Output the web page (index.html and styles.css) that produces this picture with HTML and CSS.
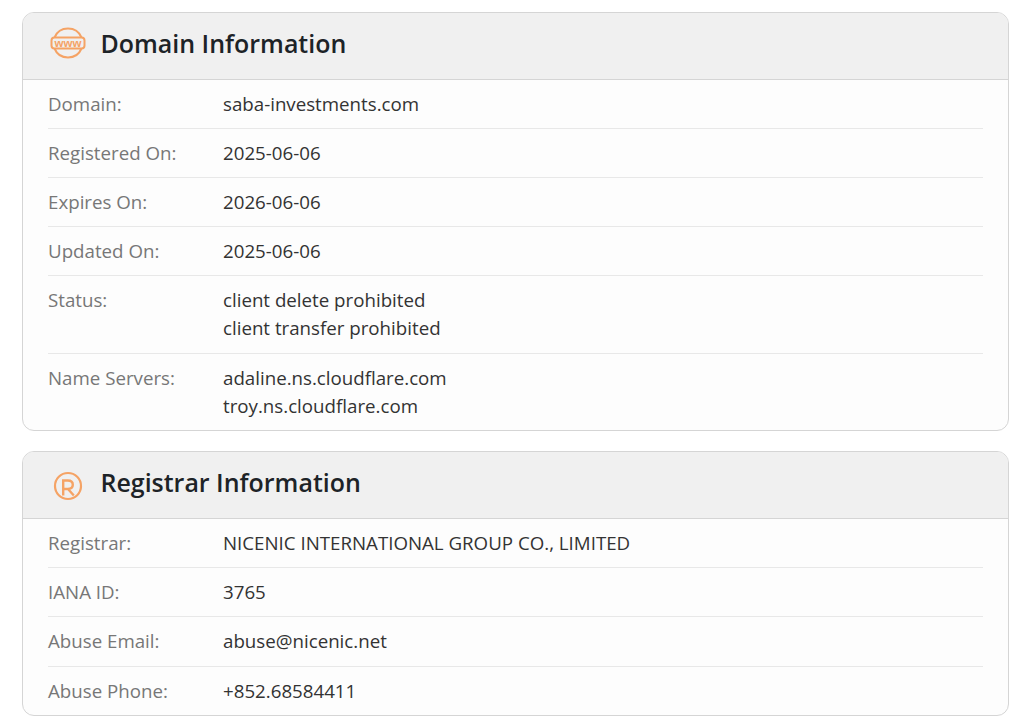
FILE: index.html
```html
<!DOCTYPE html>
<html lang="en">
<head>
<meta charset="utf-8">
<title>Domain Information</title>
<link rel="stylesheet" href="styles.css">
</head>
<body>
<section class="card">
  <header class="card-head">
    <svg class="icon" viewBox="0 0 36 38" width="36" height="38" aria-hidden="true">
      <g fill="none" stroke="#f5a365" stroke-width="2">
        <path d="M4.500 12.500C7 6.500 12 3.500 18 3.500S29 6.500 31.500 12.500"/>
        <path d="M4.500 23.500C7 29.500 12 32.500 18 32.500S29 29.500 31.500 23.500"/>
        <rect x="1.500" y="12.500" width="33" height="11" rx="3"/>
      </g>
      <text class="www" x="18" y="21.500" text-anchor="middle">www</text>
    </svg>
    <h2 class="card-title">Domain Information</h2>
  </header>
  <div class="row"><div class="label">Domain:</div><div class="value">saba-investments.com</div></div>
  <div class="row"><div class="label">Registered On:</div><div class="value">2025-06-06</div></div>
  <div class="row"><div class="label">Expires On:</div><div class="value">2026-06-06</div></div>
  <div class="row"><div class="label">Updated On:</div><div class="value">2025-06-06</div></div>
  <div class="row"><div class="label">Status:</div><div class="value">client delete prohibited<br>client transfer prohibited</div></div>
  <div class="row"><div class="label">Name Servers:</div><div class="value">adaline.ns.cloudflare.com<br>troy.ns.cloudflare.com</div></div>
</section>
<section class="card">
  <header class="card-head">
    <svg class="icon" viewBox="0 0 36 38" width="36" height="38" aria-hidden="true">
      <circle cx="18" cy="22" r="13" fill="none" stroke="#f5a365" stroke-width="2.200"/>
      <path d="M13.200 31.500V16.500H17.800C21 16.500 22.800 18.300 22.800 20.800S21 25 17.800 25H13.200M18 25L23.800 31.500" fill="none" stroke="#f5a365" stroke-width="2.400"/>
    </svg>
    <h2 class="card-title">Registrar Information</h2>
  </header>
  <div class="row"><div class="label">Registrar:</div><div class="value">NICENIC INTERNATIONAL GROUP CO., LIMITED</div></div>
  <div class="row"><div class="label">IANA ID:</div><div class="value">3765</div></div>
  <div class="row"><div class="label">Abuse Email:</div><div class="value">abuse@nicenic.net</div></div>
  <div class="row"><div class="label">Abuse Phone:</div><div class="value">+852.68584411</div></div>
</section>
</body>
</html>
```
FILE: styles.css
```css
html, body {
  margin: 0;
  background: #fff;
}
body {
  padding: 12.100px 13px 0 22px;
  font-family: "Open Sans", sans-serif;
  font-size: 18.720px;
  line-height: 28.080px;
  color: #333;
}
.card {
  border: 1px solid #d5d5d5;
  border-radius: 12px;
  background: #fdfdfd;
  margin-bottom: 20.560px;
  overflow: hidden;
}
.card-head {
  display: flex;
  align-items: center;
  gap: 14.500px;
  box-sizing: content-box;
  height: 61px;
  padding: 0 0 5px 27px;
  background: #f0f0f0;
  border-bottom: 1px solid #d5d5d5;
}
.icon {
  flex: none;
}
.www {
  font-family: "Liberation Sans", sans-serif;
  font-size: 11.500px;
  font-weight: 700;
  fill: #f5a365;
}
.card-title {
  margin: -2px 0 0;
  font-size: 24.960px;
  line-height: 34px;
  font-weight: 600;
  color: #1d2327;
}
.row {
  display: flex;
  margin: 0 25px;
  padding: 10px 0;
  border-bottom: 1px solid #e8e8e8;
}
.row:last-child {
  border-bottom: 0;
}
.label {
  flex: none;
  width: 175px;
  color: #777;
}
.value {
  color: #333;
}
```
